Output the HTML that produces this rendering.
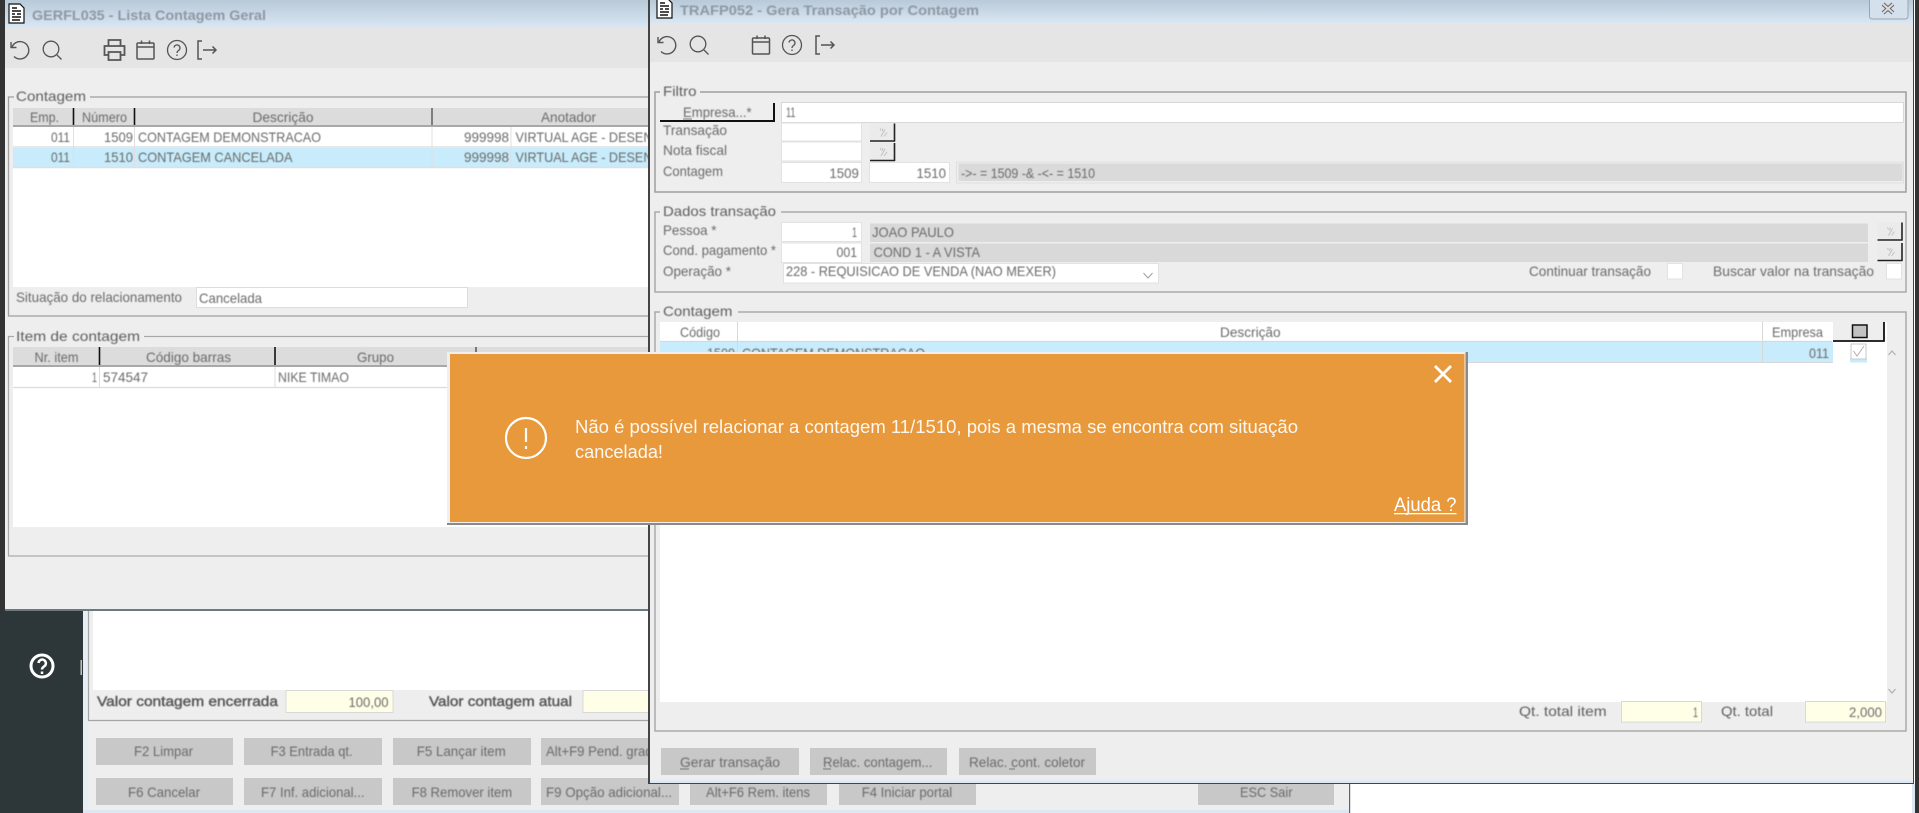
<!DOCTYPE html>
<html><head><meta charset="utf-8"><title>TRAFP052</title>
<style>
html,body{margin:0;padding:0;width:1919px;height:813px;overflow:hidden;background:#fff}
svg{display:block}
text{font-family:"Liberation Sans",Arial,sans-serif;font-size:14px;fill:#6a6a6a}
text.d{fill:#5e5e5e}
.ti{font-weight:bold;fill:#8c98a4}
.txt{filter:blur(.45px)}
</style></head><body>
<svg width="1919" height="813" viewBox="0 0 1919 813" xmlns="http://www.w3.org/2000/svg">
<defs>
<linearGradient id="tg" x1="0" y1="0" x2="0" y2="1"><stop offset="0" stop-color="#b8c9d8"/><stop offset="1" stop-color="#dae7f3"/></linearGradient>
<g id="undo" fill="none" stroke="#555" stroke-width="1.4"><path d="M-8-3A8.7 8.7 0 1 1-6 6.5"/><path d="M-9-8V-2.500H-3.500"/></g>
<g id="search" fill="none" stroke="#555" stroke-width="1.3"><circle cx="-1" cy="-1" r="7.800"/><path d="M5 5L9.500 9.500"/></g>
<g id="print" fill="none" stroke="#555" stroke-width="1.800"><path d="M-6-4V-10H6V-4"/><path d="M-6 5H-10V-4H10V5H6"/><path d="M-6 2H6V10H-6Z"/></g>
<g id="cal" fill="none" stroke="#555" stroke-width="1.500"><rect x="-8.500" y="-7" width="17" height="16" rx="1"/><path d="M-8.500-3H8.500M-4-9.500V-6M4-9.500V-6"/></g>
<g id="help" fill="none" stroke="#555" stroke-width="1.300"><circle r="9.500"/><path d="M-3-2.500A3 3 0 1 1 1.500.500C.4 1.200 0 1.800 0 3M0 4.500V6"/></g>
<g id="exit" fill="none" stroke="#555" stroke-width="1.500"><path d="M-5-9H-9V9H-5"/><path d="M-4 0H9M5.500-3.500L9 0 5.500 3.500"/></g>
<g id="doc"><path d="M0 0H11L15 4V19H0Z" fill="#fff" stroke="#111" stroke-width="1.200"/><path d="M3 4H8M3 7H12M3 10H6M8 10H12M3 13H12M3 16H11" stroke="#111" stroke-width="1.500"/></g>
<g id="mini"><rect width="25" height="18" fill="#ebebeb"/><path d="M0 17.500H25M24.500 0V18" stroke="#222" stroke-width="1.600"/><path d="M10 5L11 7M13 5L12 8M15 6L11 13M17 9L14 13" stroke="#c2c2c2" stroke-width="1"/></g>
</defs>

<!-- Background application -->
<rect width="1919" height="813" fill="#fff"/>
<rect x="0" y="0" width="83" height="813" fill="#2d3739"/>
<rect x="83" y="611" width="1266" height="202" fill="#eee"/>
<rect x="83" y="611" width="5" height="202" fill="#e6edf5"/>
<rect x="93" y="611" width="560" height="79" fill="#fff"/>
<path d="M88.500 611V720.500H660" fill="none" stroke="#a5a5a5" stroke-width="1.200"/>
<rect x="83" y="810" width="1266" height="3" fill="#dbe7f3"/>
<rect x="1349" y="611" width="1.200" height="202" fill="#5b6470"/>
<rect x="1912" y="784" width="3" height="29" fill="#dbe7f3"/>
<rect x="1915" y="0" width="4" height="813" fill="#333"/>
<rect x="0" y="0" width="5" height="611" fill="#333"/>
<circle cx="42" cy="666" r="11" fill="none" stroke="#fff" stroke-width="3"/>
<path d="M38.500 663A3.700 3.700 0 1 1 44 666.500C42.600 667.400 42 668 42 669.500M42 671.500V674" fill="none" stroke="#fff" stroke-width="2.500"/>
<rect x="80.500" y="660" width="1.400" height="15" fill="#ccc"/>
<rect x="286" y="690.500" width="107" height="22" fill="#ffffe8" stroke="#d8d8d8"/>
<rect x="583" y="690.500" width="90" height="22" fill="#ffffe8" stroke="#d8d8d8"/>
<g fill="#c8c8c8">
<rect x="96" y="738" width="137" height="27"/><rect x="244" y="738" width="138" height="27"/><rect x="393" y="738" width="138" height="27"/><rect x="541" y="738" width="138" height="27"/>
<rect x="96" y="778" width="137" height="27"/><rect x="244" y="778" width="138" height="27"/><rect x="393" y="778" width="138" height="27"/><rect x="541" y="778" width="138" height="27"/><rect x="690" y="778" width="137" height="27"/><rect x="839" y="778" width="137" height="27"/><rect x="1198" y="778" width="136" height="27"/>
</g>
<g class="txt">
<text x="97" y="706" textLength="181" lengthAdjust="spacingAndGlyphs" style="fill:#555;stroke:#555;stroke-width:.4">Valor contagem encerrada</text>
<text x="348.500" y="707" textLength="40" lengthAdjust="spacingAndGlyphs">100,00</text>
<text x="429" y="706" textLength="143" lengthAdjust="spacingAndGlyphs" style="fill:#555;stroke:#555;stroke-width:.4">Valor contagem atual</text>
<text x="134" y="756" textLength="59" lengthAdjust="spacingAndGlyphs">F2 Limpar</text>
<text x="270.600" y="756" textLength="82" lengthAdjust="spacingAndGlyphs">F3 Entrada qt.</text>
<text x="416.700" y="756" textLength="89" lengthAdjust="spacingAndGlyphs">F5 Lançar item</text>
<text x="546" y="756" textLength="114" lengthAdjust="spacingAndGlyphs">Alt+F9 Pend. grade</text>
<text x="128" y="797" textLength="72" lengthAdjust="spacingAndGlyphs">F6 Cancelar</text>
<text x="261" y="797" textLength="103.500" lengthAdjust="spacingAndGlyphs">F7 Inf. adicional...</text>
<text x="411.600" y="797" textLength="100.600" lengthAdjust="spacingAndGlyphs">F8 Remover item</text>
<text x="546" y="797" textLength="126" lengthAdjust="spacingAndGlyphs">F9 Opção adicional...</text>
<text x="706" y="797" textLength="104" lengthAdjust="spacingAndGlyphs">Alt+F6 Rem. itens</text>
<text x="861.700" y="797" textLength="90.500" lengthAdjust="spacingAndGlyphs">F4 Iniciar portal</text>
<text x="1240" y="797" textLength="52.500" lengthAdjust="spacingAndGlyphs">ESC Sair</text>
</g>

<!-- Window 1 -->
<rect x="5" y="0" width="645" height="609" fill="#eee"/>
<rect x="5" y="609" width="645" height="2" fill="#6b7a80"/>
<rect x="5" y="0" width="645" height="28" fill="url(#tg)"/>
<rect x="5" y="28" width="645" height="40" fill="#e5e5e5"/>
<use href="#doc" x="9" y="4"/>
<use href="#undo" x="20" y="50"/><use href="#search" x="52" y="50"/><use href="#print" x="114.500" y="50"/><use href="#cal" x="145.500" y="50"/><use href="#help" x="177" y="50"/><use href="#exit" x="207" y="50"/>
<rect x="8.500" y="97" width="700" height="219" fill="none" stroke="#a0a0a0" stroke-width="1.300"/>
<rect x="14" y="90" width="76" height="12" fill="#eee"/>
<rect x="13" y="108" width="640" height="18" fill="#dcdcdc"/>
<rect x="13" y="125" width="640" height="2" fill="#a8a8a8"/>
<rect x="13" y="127" width="640" height="160" fill="#fff"/>
<rect x="13" y="148" width="640" height="19" fill="#c8ecfb"/>
<path d="M13 147H653M13 167.500H653" stroke="#dfdfdf" stroke-width="1.500"/>
<path d="M73.500 108V125M134.500 108V125" stroke="#111" stroke-width="1.600"/>
<path d="M432 108V125" stroke="#555" stroke-width="1.400"/>
<path d="M73.500 127V167M134.500 127V167M432 127V167M511 127V167" stroke="#dfdfdf" stroke-width="1"/>
<rect x="196.500" y="287.500" width="271" height="20" fill="#fff" stroke="#ddd"/>
<rect x="8.500" y="336.500" width="700" height="219.500" fill="none" stroke="#a8a8a8" stroke-width="1.200"/>
<rect x="14" y="330" width="130" height="12" fill="#eee"/>
<rect x="13" y="347" width="640" height="18" fill="#dcdcdc"/>
<rect x="13" y="365" width="640" height="2" fill="#a8a8a8"/>
<rect x="13" y="367" width="640" height="160" fill="#fff"/>
<path d="M13 387.500H653" stroke="#dcdcdc" stroke-width="1.200"/>
<path d="M99.500 347V365M275 347V365" stroke="#111" stroke-width="1.600"/>
<path d="M476 347V365" stroke="#333" stroke-width="1.200"/>
<path d="M99.500 367V387M275 367V387" stroke="#dcdcdc"/>
<g class="txt">
<text x="32" y="20" textLength="234" lengthAdjust="spacingAndGlyphs" class="ti">GERFL035 - Lista Contagem Geral</text>
<text x="16" y="101" textLength="70" lengthAdjust="spacingAndGlyphs" class="d">Contagem</text>
<text x="30" y="122" textLength="29" lengthAdjust="spacingAndGlyphs">Emp.</text>
<text x="82" y="122" textLength="45" lengthAdjust="spacingAndGlyphs">Número</text>
<text x="252.500" y="122" textLength="61" lengthAdjust="spacingAndGlyphs">Descrição</text>
<text x="541" y="122" textLength="55" lengthAdjust="spacingAndGlyphs">Anotador</text>
<text x="51" y="142" textLength="19" lengthAdjust="spacingAndGlyphs">011</text>
<text x="104" y="142" textLength="29" lengthAdjust="spacingAndGlyphs">1509</text>
<text x="138" y="142" textLength="183" lengthAdjust="spacingAndGlyphs">CONTAGEM DEMONSTRACAO</text>
<text x="464" y="142" textLength="45" lengthAdjust="spacingAndGlyphs">999998</text>
<text x="515.500" y="142" textLength="137" lengthAdjust="spacingAndGlyphs">VIRTUAL AGE - DESEN</text>
<text x="51" y="162" textLength="19" lengthAdjust="spacingAndGlyphs">011</text>
<text x="104" y="162" textLength="29" lengthAdjust="spacingAndGlyphs">1510</text>
<text x="138" y="162" textLength="154.500" lengthAdjust="spacingAndGlyphs">CONTAGEM CANCELADA</text>
<text x="464" y="162" textLength="45" lengthAdjust="spacingAndGlyphs">999998</text>
<text x="515.500" y="162" textLength="137" lengthAdjust="spacingAndGlyphs">VIRTUAL AGE - DESEN</text>
<text x="16" y="302" textLength="166" lengthAdjust="spacingAndGlyphs">Situação do relacionamento</text>
<text x="199" y="303" textLength="63" lengthAdjust="spacingAndGlyphs">Cancelada</text>
<text x="16" y="341" textLength="124" lengthAdjust="spacingAndGlyphs" class="d">Item de contagem</text>
<text x="34.500" y="362" textLength="44" lengthAdjust="spacingAndGlyphs">Nr. item</text>
<text x="146" y="362" textLength="85" lengthAdjust="spacingAndGlyphs">Código barras</text>
<text x="357" y="362" textLength="37" lengthAdjust="spacingAndGlyphs">Grupo</text>
<text x="92" y="382" textLength="5" lengthAdjust="spacingAndGlyphs">1</text>
<text x="103" y="382" textLength="45" lengthAdjust="spacingAndGlyphs">574547</text>
<text x="278" y="382" textLength="71" lengthAdjust="spacingAndGlyphs">NIKE TIMAO</text>
</g>

<!-- Window 2 -->
<rect x="648" y="0" width="1266" height="784" fill="#444"/>
<rect x="650" y="0" width="1263" height="783" fill="#eee"/>
<rect x="650" y="780.500" width="1263" height="2.500" fill="#dce8f4"/>
<rect x="650" y="0" width="1263" height="23" fill="url(#tg)"/>
<rect x="650" y="23" width="1263" height="39" fill="#e5e5e5"/>
<path d="M1869.500 0V16Q1869.500 19 1872.500 19H1905Q1908 19 1908 16V0" fill="#d4e0ec" stroke="#9aa6b0"/>
<path d="M1883 4L1893 13M1893 4L1883 13" stroke="#666" stroke-width="4"/>
<path d="M1883 4L1893 13M1893 4L1883 13" stroke="#ddd" stroke-width="2"/>
<use href="#doc" x="657" y="-1"/>
<use href="#undo" x="667" y="45"/><use href="#search" x="699" y="45"/><use href="#cal" x="761" y="45"/><use href="#help" x="792" y="45"/><use href="#exit" x="825" y="45"/>

<rect x="655" y="92" width="1251" height="100" fill="none" stroke="#9e9e9e" stroke-width="1.500"/>
<rect x="660" y="85" width="40" height="12" fill="#eee"/>
<rect x="660" y="103" width="113" height="18" fill="#eee"/>
<path d="M660 121H774V103" fill="none" stroke="#111" stroke-width="2"/>
<rect x="781.500" y="102.500" width="1122" height="20" fill="#fff" stroke="#d8d8d8"/>
<rect x="781.500" y="123" width="80" height="18" fill="#fff" stroke="#e2e2e2"/>
<rect x="781.500" y="142" width="80" height="19" fill="#fff" stroke="#e2e2e2"/>
<use href="#mini" x="870" y="123.500"/><use href="#mini" x="870" y="143"/>
<rect x="781.500" y="162.500" width="80" height="20" fill="#fff" stroke="#e2e2e2"/>
<rect x="869.500" y="162.500" width="80" height="20" fill="#fff" stroke="#e2e2e2"/>
<rect x="956.500" y="162" width="947" height="21" fill="#eee" stroke="#e0e0e0"/>
<rect x="958.500" y="163.500" width="944" height="17.500" fill="#dadada"/>

<rect x="655" y="212" width="1251" height="80" fill="none" stroke="#a5a5a5" stroke-width="1.400"/>
<rect x="660" y="205" width="121" height="12" fill="#eee"/>
<rect x="781.500" y="222.500" width="80" height="19" fill="#fff" stroke="#e2e2e2"/>
<rect x="781.500" y="243" width="80" height="19.500" fill="#fff" stroke="#e2e2e2"/>
<rect x="870" y="223.500" width="998" height="18.500" fill="#d9d9d9"/>
<rect x="870" y="243.500" width="998" height="18.500" fill="#d9d9d9"/>
<use href="#mini" x="1877.500" y="222.500"/><use href="#mini" x="1877.500" y="243"/>
<rect x="783.500" y="263.500" width="375" height="19.500" fill="#fff" stroke="#e2e2e2"/>
<path d="M1143.500 273L1148 278L1152.500 273" fill="none" stroke="#9c9c9c"/>
<rect x="1667.500" y="263.500" width="15" height="15.500" fill="#fff" stroke="#e2e2e2"/>
<rect x="1886.500" y="263.500" width="15" height="15.500" fill="#fff" stroke="#e2e2e2"/>

<rect x="655" y="312" width="1251" height="419" fill="none" stroke="#a5a5a5" stroke-width="1.400"/>
<rect x="660" y="305" width="78" height="12" fill="#eee"/>
<rect x="660" y="322" width="1227" height="380" fill="#fff"/>
<path d="M660 341.500H1832" stroke="#d8d8d8" stroke-width="1.200"/>
<rect x="660" y="342" width="1173" height="20" fill="#c8ecfb"/>
<path d="M660 362.500H1833" stroke="#d8d8d8"/>
<path d="M737.500 322V362M1762.500 322V362" stroke="#d8d8d8"/>
<rect x="1833" y="322" width="51" height="19" fill="#eee"/>
<path d="M1833 341H1884V322" fill="none" stroke="#111" stroke-width="1.800"/>
<rect x="1852.500" y="325" width="14.500" height="12.500" fill="#c2c2c2" stroke="#111" stroke-width="1.500"/>
<rect x="1850" y="358" width="17" height="4.500" fill="#c8ecfb"/>
<rect x="1851" y="344" width="15" height="15" fill="#fff" stroke="#c8c8c8"/>
<path d="M1853.500 351L1857 356L1864 346" fill="none" stroke="#b0b0b0"/>
<rect x="1887" y="342" width="17" height="359" fill="#eee"/>
<path d="M1888.500 355L1892 351L1895.500 355M1888.500 689L1892 693L1895.500 689" fill="none" stroke="#b4b4b4" stroke-width="1.300"/>
<rect x="1621.500" y="701.500" width="80" height="20.500" fill="#ffffe8" stroke="#d8d8d8"/>
<rect x="1805.500" y="701.500" width="80" height="20.500" fill="#ffffe8" stroke="#d8d8d8"/>
<g fill="#c8c8c8"><rect x="661" y="748" width="138" height="27"/><rect x="810" y="748" width="137" height="27"/><rect x="959" y="748" width="137" height="27"/></g>
<g class="txt">
<text x="680" y="15" textLength="299" lengthAdjust="spacingAndGlyphs" class="ti">TRAFP052 - Gera Transação por Contagem</text>
<text x="663" y="96" textLength="33.500" lengthAdjust="spacingAndGlyphs" class="d">Filtro</text>
<text x="683" y="117" textLength="68.600" lengthAdjust="spacingAndGlyphs">Empresa...*</text>
<text x="786" y="117" textLength="9.500" lengthAdjust="spacingAndGlyphs">11</text>
<text x="663" y="135" textLength="64" lengthAdjust="spacingAndGlyphs">Transação</text>
<text x="663" y="155" textLength="64" lengthAdjust="spacingAndGlyphs">Nota fiscal</text>
<text x="663" y="176" textLength="60" lengthAdjust="spacingAndGlyphs">Contagem</text>
<text x="829.400" y="178" textLength="29.500" lengthAdjust="spacingAndGlyphs">1509</text>
<text x="916.500" y="178" textLength="29.500" lengthAdjust="spacingAndGlyphs">1510</text>
<text x="961" y="178" textLength="134" lengthAdjust="spacingAndGlyphs" xml:space="preserve">-&gt;- = 1509 -&amp; -&lt;- = 1510</text>
<text x="663" y="216" textLength="113" lengthAdjust="spacingAndGlyphs" class="d">Dados transação</text>
<text x="663" y="235" textLength="53.500" lengthAdjust="spacingAndGlyphs">Pessoa *</text>
<text x="852" y="237" textLength="5" lengthAdjust="spacingAndGlyphs">1</text>
<text x="872" y="237" textLength="82" lengthAdjust="spacingAndGlyphs">JOAO PAULO</text>
<text x="663" y="255" textLength="113" lengthAdjust="spacingAndGlyphs">Cond. pagamento *</text>
<text x="836.500" y="257" textLength="20.600" lengthAdjust="spacingAndGlyphs">001</text>
<text x="873.600" y="257" textLength="106.500" lengthAdjust="spacingAndGlyphs">COND 1 - A VISTA</text>
<text x="663" y="276" textLength="68" lengthAdjust="spacingAndGlyphs">Operação *</text>
<text x="786" y="276" textLength="270" lengthAdjust="spacingAndGlyphs">228 - REQUISICAO DE VENDA (NAO MEXER)</text>
<text x="1529" y="276" textLength="122" lengthAdjust="spacingAndGlyphs">Continuar transação</text>
<text x="1713" y="276" textLength="161" lengthAdjust="spacingAndGlyphs">Buscar valor na transação</text>
<text x="663" y="316" textLength="69.400" lengthAdjust="spacingAndGlyphs" class="d">Contagem</text>
<text x="680" y="337" textLength="40" lengthAdjust="spacingAndGlyphs">Código</text>
<text x="1220" y="337" textLength="60.600" lengthAdjust="spacingAndGlyphs">Descrição</text>
<text x="1772" y="337" textLength="51" lengthAdjust="spacingAndGlyphs">Empresa</text>
<text x="707" y="358" textLength="28" lengthAdjust="spacingAndGlyphs">1509</text>
<text x="742" y="358" textLength="183" lengthAdjust="spacingAndGlyphs">CONTAGEM DEMONSTRACAO</text>
<text x="1809" y="358" textLength="20" lengthAdjust="spacingAndGlyphs">011</text>
<text x="1519" y="716" textLength="87.600" lengthAdjust="spacingAndGlyphs" style="fill:#5e5e5e">Qt. total item</text>
<text x="1693" y="717" textLength="5" lengthAdjust="spacingAndGlyphs">1</text>
<text x="1721" y="716" textLength="52" lengthAdjust="spacingAndGlyphs" style="fill:#5e5e5e">Qt. total</text>
<text x="1849" y="717" textLength="33" lengthAdjust="spacingAndGlyphs">2,000</text>
<text x="680" y="767" textLength="100" lengthAdjust="spacingAndGlyphs">Gerar transação</text>
<text x="823" y="767" textLength="109.400" lengthAdjust="spacingAndGlyphs">Relac. contagem...</text>
<text x="969" y="767" textLength="116" lengthAdjust="spacingAndGlyphs">Relac. cont. coletor</text>
</g>
<path d="M683 119H692M680 769H689M823 769H831M1009 769H1015" stroke="#777"/>

<!-- Dialog -->
<rect x="447" y="352" width="1021" height="173" fill="#8a8a8a"/>
<rect x="447" y="352" width="1018.500" height="171" fill="#efefef"/>
<rect x="450" y="354" width="1014.500" height="168" fill="#e8993c"/>
<circle cx="526" cy="438" r="20" fill="none" stroke="#fff" stroke-width="2.200"/>
<path d="M526 428V442M526 446V449" stroke="#fff" stroke-width="2.200" opacity=".95"/>
<path d="M1435 366L1451 382M1451 366L1435 382" stroke="#fff" stroke-width="2.800"/>
<g>
<text x="575" y="433" textLength="723" lengthAdjust="spacingAndGlyphs" style="font-size:18px;fill:#fff;opacity:.93">Não é possível relacionar a contagem 11/1510, pois a mesma se encontra com situação</text>
<text x="575" y="458" textLength="88" lengthAdjust="spacingAndGlyphs" style="font-size:18px;fill:#fff;opacity:.93">cancelada!</text>
<text x="1394" y="511" textLength="62.500" lengthAdjust="spacingAndGlyphs" style="font-size:19px;fill:#fff">Ajuda ?</text>
</g>
<rect x="1394" y="513" width="62.500" height="1.300" fill="#fff"/>
</svg>
</body></html>
